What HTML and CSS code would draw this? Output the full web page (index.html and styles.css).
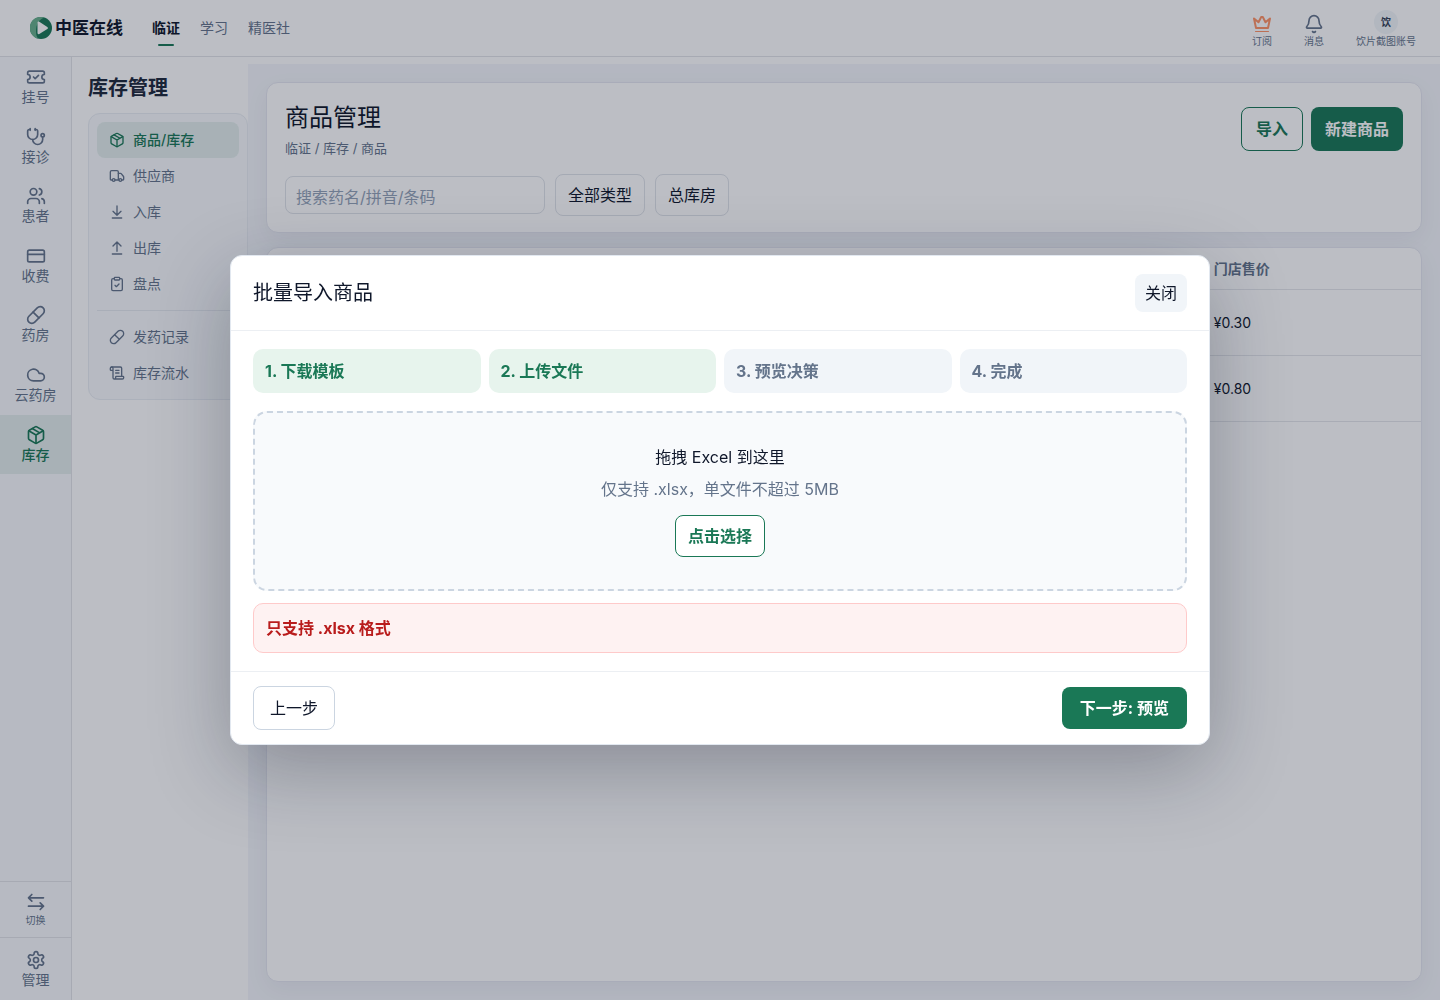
FILE: index.html
```html
<!DOCTYPE html>
<html lang="zh-CN">

<head>
    <meta charset="UTF-8" />
    <meta name="viewport" content="width=device-width, initial-scale=1.0" />
    <title>商品管理 - 中医在线</title>
    <link rel="stylesheet" href="styles.css">
</head>

<body>
    <div class="app">

        <!-- Top Bar -->
        <header class="topbar">
            <a href="#" class="brand">
                <svg class="brand-logo" viewBox="0 0 22 22">
                    <circle cx="11" cy="11" r="11" fill="#1a7856" />
                    <path d="M14.500 .6A11 11 0 1 0 8.500 21.700C6 19.500 5.500 15 6.500 9.500C7.500 5 10.500 2 14.500 .6z" fill="#68b08c" />
                    <path d="M7.500 5.800c0-1 .9-1.500 1.800-1l8 5.200c.8.500.8 1.600 0 2.100l-8 5c-.9.500-1.800 0-1.800-1z" fill="#fff" />
                </svg>
                <span>中医在线</span>
            </a>
            <nav class="tabs">
                <a href="#" class="tab active">临证</a>
                <a href="#" class="tab">学习</a>
                <a href="#" class="tab">精医社</a>
            </nav>
            <div class="top-actions">
                <a href="#" class="top-action">
                    <svg class="icon crown" viewBox="0 0 20 20">
                        <path d="M2 4.500L4 14h12l2-9.500-4.500 3.800L10.800 3h-1.600L6.500 8.300z" />
                        <path class="crown-base" d="M3.500 17.500h13" />
                    </svg>
                    <span>订阅</span>
                </a>
                <a href="#" class="top-action">
                    <svg class="icon" viewBox="0 0 24 24">
                        <path d="M10.268 21a2 2 0 0 0 3.464 0" />
                        <path d="M3.262 15.326A1 1 0 0 0 4 17h16a1 1 0 0 0 .74-1.673C19.410 13.956 18 12.499 18 8A6 6 0 0 0 6 8c0 4.499-1.411 5.956-2.738 7.326" />
                    </svg>
                    <span>消息</span>
                </a>
                <a href="#" class="top-action">
                    <span class="avatar">饮</span>
                    <span>饮片截图账号</span>
                </a>
            </div>
        </header>

        <div class="layout">

            <!-- Main Rail -->
            <nav class="rail">
                <a href="#" class="rail-item">
                    <svg class="icon" viewBox="0 0 24 24">
                        <path d="M2 9a3 3 0 0 1 0 6v2a2 2 0 0 0 2 2h16a2 2 0 0 0 2-2v-2a3 3 0 0 1 0-6V7a2 2 0 0 0-2-2H4a2 2 0 0 0-2 2Z" />
                        <path d="m9 12 2 2 4-4" />
                    </svg>
                    <span>挂号</span>
                </a>
                <a href="#" class="rail-item">
                    <svg class="icon" viewBox="0 0 24 24">
                        <path d="M11 2v2M5 2v2" />
                        <path d="M5 3H4a2 2 0 0 0-2 2v4a6 6 0 0 0 12 0V5a2 2 0 0 0-2-2h-1" />
                        <path d="M8 15a6 6 0 0 0 12 0v-3" />
                        <circle cx="20" cy="10" r="2" />
                    </svg>
                    <span>接诊</span>
                </a>
                <a href="#" class="rail-item">
                    <svg class="icon" viewBox="0 0 24 24">
                        <path d="M16 21v-2a4 4 0 0 0-4-4H6a4 4 0 0 0-4 4v2" />
                        <circle cx="9" cy="7" r="4" />
                        <path d="M22 21v-2a4 4 0 0 0-3-3.870M16 3.130a4 4 0 0 1 0 7.750" />
                    </svg>
                    <span>患者</span>
                </a>
                <a href="#" class="rail-item">
                    <svg class="icon" viewBox="0 0 24 24">
                        <rect width="20" height="14" x="2" y="5" rx="2" />
                        <path d="M2 10h20" />
                    </svg>
                    <span>收费</span>
                </a>
                <a href="#" class="rail-item">
                    <svg class="icon" viewBox="0 0 24 24">
                        <path d="m10.500 20.500 10-10a4.950 4.950 0 1 0-7-7l-10 10a4.950 4.950 0 1 0 7 7Z" />
                        <path d="m8.500 8.500 7 7" />
                    </svg>
                    <span>药房</span>
                </a>
                <a href="#" class="rail-item">
                    <svg class="icon" viewBox="0 0 24 24">
                        <path d="M17.500 19H9a7 7 0 1 1 6.710-9h1.790a4.500 4.500 0 1 1 0 9Z" />
                    </svg>
                    <span>云药房</span>
                </a>
                <a href="#" class="rail-item active">
                    <svg class="icon" viewBox="0 0 24 24">
                        <path d="M11 21.730a2 2 0 0 0 2 0l7-4A2 2 0 0 0 21 16V8a2 2 0 0 0-1-1.730l-7-4a2 2 0 0 0-2 0l-7 4A2 2 0 0 0 3 8v8a2 2 0 0 0 1 1.730z" />
                        <path d="M12 22V12M3.290 7 12 12l8.710-5M7.500 4.270l9 5.150" />
                    </svg>
                    <span>库存</span>
                </a>
                <div class="rail-bottom">
                    <a href="#" class="rail-item rail-switch">
                        <svg class="icon" viewBox="0 0 24 24">
                            <path d="M7 3 3 7l4 4M3 7h18M17 13l4 4-4 4M21 17H3" />
                        </svg>
                        <span>切换</span>
                    </a>
                    <a href="#" class="rail-item rail-admin">
                        <svg class="icon" viewBox="0 0 24 24">
                            <path d="M12.220 2h-.44a2 2 0 0 0-2 2v.18a2 2 0 0 1-1 1.730l-.43.25a2 2 0 0 1-2 0l-.15-.08a2 2 0 0 0-2.730.73l-.22.38a2 2 0 0 0 .73 2.730l.15.1a2 2 0 0 1 1 1.720v.51a2 2 0 0 1-1 1.740l-.15.09a2 2 0 0 0-.73 2.730l.22.38a2 2 0 0 0 2.730.73l.15-.08a2 2 0 0 1 2 0l.43.25a2 2 0 0 1 1 1.730V20a2 2 0 0 0 2 2h.44a2 2 0 0 0 2-2v-.18a2 2 0 0 1 1-1.730l.43-.25a2 2 0 0 1 2 0l.15.08a2 2 0 0 0 2.730-.73l.22-.39a2 2 0 0 0-.73-2.730l-.15-.08a2 2 0 0 1-1-1.740v-.5a2 2 0 0 1 1-1.740l.15-.09a2 2 0 0 0 .73-2.730l-.22-.38a2 2 0 0 0-2.730-.73l-.15.08a2 2 0 0 1-2 0l-.43-.25a2 2 0 0 1-1-1.730V4a2 2 0 0 0-2-2z" />
                            <circle cx="12" cy="12" r="3" />
                        </svg>
                        <span>管理</span>
                    </a>
                </div>
            </nav>

            <!-- Stock Menu -->
            <aside class="side">
                <h2 class="side-title">库存管理</h2>
                <nav class="side-menu">
                    <a href="#" class="side-item active">
                        <svg class="icon" viewBox="0 0 24 24">
                            <path d="M11 21.730a2 2 0 0 0 2 0l7-4A2 2 0 0 0 21 16V8a2 2 0 0 0-1-1.730l-7-4a2 2 0 0 0-2 0l-7 4A2 2 0 0 0 3 8v8a2 2 0 0 0 1 1.730z" />
                            <path d="M12 22V12M3.290 7 12 12l8.710-5M7.500 4.270l9 5.150" />
                        </svg>
                        <span>商品/库存</span>
                    </a>
                    <a href="#" class="side-item">
                        <svg class="icon" viewBox="0 0 24 24">
                            <path d="M14 18V6a2 2 0 0 0-2-2H4a2 2 0 0 0-2 2v11a1 1 0 0 0 1 1h2M15 18H9" />
                            <path d="M19 18h2a1 1 0 0 0 1-1v-3.650a1 1 0 0 0-.22-.624l-3.480-4.350A1 1 0 0 0 17.520 8H14" />
                            <circle cx="17" cy="18" r="2" />
                            <circle cx="7" cy="18" r="2" />
                        </svg>
                        <span>供应商</span>
                    </a>
                    <a href="#" class="side-item">
                        <svg class="icon" viewBox="0 0 24 24">
                            <path d="M12 17V3M6 11l6 6 6-6M19 21H5" />
                        </svg>
                        <span>入库</span>
                    </a>
                    <a href="#" class="side-item">
                        <svg class="icon" viewBox="0 0 24 24">
                            <path d="m18 9-6-6-6 6M12 3v14M5 21h14" />
                        </svg>
                        <span>出库</span>
                    </a>
                    <a href="#" class="side-item">
                        <svg class="icon" viewBox="0 0 24 24">
                            <rect width="8" height="4" x="8" y="2" rx="1" />
                            <path d="M16 4h2a2 2 0 0 1 2 2v14a2 2 0 0 1-2 2H6a2 2 0 0 1-2-2V6a2 2 0 0 1 2-2h2M9 14l2 2 4-4" />
                        </svg>
                        <span>盘点</span>
                    </a>
                    <hr class="side-divider">
                    <a href="#" class="side-item">
                        <svg class="icon" viewBox="0 0 24 24">
                            <path d="m10.500 20.500 10-10a4.950 4.950 0 1 0-7-7l-10 10a4.950 4.950 0 1 0 7 7Z" />
                            <path d="m8.500 8.500 7 7" />
                        </svg>
                        <span>发药记录</span>
                    </a>
                    <a href="#" class="side-item">
                        <svg class="icon" viewBox="0 0 24 24">
                            <path d="M15 12h-5M15 8h-5M19 17V5a2 2 0 0 0-2-2H4" />
                            <path d="M8 21h12a2 2 0 0 0 2-2v-1a1 1 0 0 0-1-1H11a1 1 0 0 0-1 1v1a2 2 0 1 1-4 0V5a2 2 0 1 0-4 0v2a1 1 0 0 0 1 1h3" />
                        </svg>
                        <span>库存流水</span>
                    </a>
                </nav>
            </aside>

            <!-- Content -->
            <main class="content">
                <section class="card page-head">
                    <div class="page-head-row">
                        <div>
                            <h1 class="page-title">商品管理</h1>
                            <p class="breadcrumb">临证 / 库存 / 商品</p>
                        </div>
                        <div class="page-actions">
                            <button type="button" class="btn btn-outline">导入</button>
                            <button type="button" class="btn btn-primary">新建商品</button>
                        </div>
                    </div>
                    <div class="filters">
                        <input type="text" class="search" placeholder="搜索药名/拼音/条码" aria-label="搜索商品" />
                        <button type="button" class="filter-btn">全部类型</button>
                        <button type="button" class="filter-btn">总库房</button>
                    </div>
                </section>

                <section class="card table-card">
                    <table class="goods-table">
                        <thead>
                            <tr>
                                <td></td>
                                <th class="col-price" scope="col">门店售价</th>
                            </tr>
                        </thead>
                        <tbody>
                            <tr>
                                <td></td>
                                <td>¥0.30</td>
                            </tr>
                            <tr>
                                <td></td>
                                <td>¥0.80</td>
                            </tr>
                        </tbody>
                    </table>
                </section>
            </main>
        </div>
    </div>

    <!-- Import Modal -->
    <div class="overlay">
        <div class="modal" role="dialog" aria-modal="true" aria-labelledby="modalTitle">
            <div class="modal-header">
                <h2 id="modalTitle">批量导入商品</h2>
                <button type="button" class="close-btn">关闭</button>
            </div>
            <div class="modal-body">
                <ol class="steps">
                    <li class="step done">1. 下载模板</li>
                    <li class="step done">2. 上传文件</li>
                    <li class="step">3. 预览决策</li>
                    <li class="step">4. 完成</li>
                </ol>
                <div class="dropzone">
                    <p>拖拽 Excel 到这里</p>
                    <p class="hint">仅支持 .xlsx，单文件不超过 5MB</p>
                    <button type="button" class="pick-btn">点击选择</button>
                </div>
                <div class="error" role="alert">只支持 .xlsx 格式</div>
            </div>
            <div class="modal-footer">
                <button type="button" class="prev-btn">上一步</button>
                <button type="button" class="next-btn">下一步: 预览</button>
            </div>
        </div>
    </div>
</body>

</html>
```

FILE: styles.css
```css
/* === Global Reset & Base Styles === */
* {
    margin: 0;
    padding: 0;
    box-sizing: border-box;
}

body {
    font-family: Inter, "Noto Sans CJK SC", sans-serif;
    font-size: 16px;
    line-height: 1.5;
    color: #0f172a;
    background-color: #ffffff;
}

a {
    color: inherit;
    text-decoration: none;
}

button,
input {
    font: inherit;
    color: inherit;
}

button {
    cursor: pointer;
}

.icon {
    display: block;
    width: 20px;
    height: 20px;
    flex: none;
    fill: none;
    stroke: currentColor;
    stroke-width: 2;
    stroke-linecap: round;
    stroke-linejoin: round;
}

.app {
    display: flex;
    flex-direction: column;
    min-height: calc(100vh - 1px);
}

/* === Top Bar === */
.topbar {
    display: flex;
    align-items: center;
    height: 57px;
    padding: 0 24px 0 30px;
    border-bottom: 1px solid #e2e4e8;
}

.brand {
    display: flex;
    align-items: center;
    gap: 3px;
    font-size: 17px;
    font-weight: 700;
    line-height: 28px;
}

.brand-logo {
    width: 22px;
    height: 22px;
}

.tabs {
    display: flex;
    gap: 20px;
    margin-left: 29px;
    font-size: 14px;
    color: #64748b;
}

.tab {
    position: relative;
    line-height: 36px;
}

.tab.active {
    font-weight: 700;
    color: #0f172a;
}

.tab.active::after {
    content: "";
    position: absolute;
    left: 50%;
    bottom: 0;
    width: 16px;
    height: 2px;
    margin-left: -8px;
    border-radius: 1px;
    background-color: #1a7856;
}

.top-actions {
    display: flex;
    align-items: flex-end;
    gap: 32px;
    margin-left: auto;
    padding-top: 2px;
    font-size: 10px;
    line-height: 14px;
    color: #64748b;
}

.top-action {
    display: flex;
    flex-direction: column;
    align-items: center;
}

.crown {
    color: #ff9466;
}

.crown-base {
    stroke-width: 1;
}

.avatar {
    width: 24px;
    height: 24px;
    border-radius: 50%;
    background-color: #f1f5f9;
    font-weight: 700;
    line-height: 24px;
    text-align: center;
    color: #334155;
}

/* === Layout === */
.layout {
    display: flex;
    flex: 1;
}

/* === Main Rail === */
.rail {
    display: flex;
    flex-direction: column;
    width: 72px;
    flex: none;
    background-color: #f8fafc;
    border-right: 1px solid #e2e4e8;
    font-size: 14px;
    line-height: 1.4;
    color: #64748b;
}

.rail-item {
    display: flex;
    flex-direction: column;
    align-items: center;
    padding: 10px 0;
}

.rail-item.active {
    background-color: #e3eeec;
    color: #1a7856;
    font-weight: 500;
}

.rail-bottom {
    margin-top: auto;
}

.rail-switch,
.rail-admin {
    border-top: 1px solid #e2e4e8;
}

.rail-switch {
    padding-bottom: 9px;
    font-size: 10px;
    line-height: 16px;
}

.rail-admin {
    padding-top: 12px;
    line-height: 20px;
}

/* === Stock Menu === */
.side {
    width: 176px;
    flex: none;
    padding: 16px 0 16px 16px;
}

.side-title {
    font-size: 20px;
    font-weight: 700;
    line-height: 30px;
    color: #1e293b;
}

.side-menu {
    margin-top: 10px;
    padding: 8px;
    border: 1px solid #e9edf3;
    border-radius: 12px;
    background-color: #f8fafc;
    font-size: 14px;
    line-height: 20px;
    color: #64748b;
}

.side-item {
    display: flex;
    align-items: center;
    gap: 8px;
    height: 36px;
    padding: 0 12px;
    border-radius: 8px;
}

.side-item .icon {
    width: 16px;
    height: 16px;
}

.side-item.active {
    background-color: #e3eeec;
    color: #1a7856;
    font-weight: 500;
}

.side-divider {
    margin: 8px 0;
    border: none;
    border-top: 1px solid #e5e9ef;
}

/* === Content === */
.content {
    display: flex;
    flex-direction: column;
    flex: 1;
    gap: 14px;
    min-width: 0;
    margin-top: 7px;
    padding: 18px;
    background-color: #f4f6fb;
}

.card {
    border: 1px solid #e5e7f0;
    border-radius: 12px;
    background-color: #ffffff;
    box-shadow: 0 8px 24px rgba(15, 23, 42, 0.05);
}

.page-head {
    padding: 18px 18px 16px;
}

.page-head-row {
    display: flex;
    align-items: center;
    justify-content: space-between;
}

.page-title {
    font-size: 24px;
    font-weight: 400;
    line-height: 34px;
}

.breadcrumb {
    margin-top: 4px;
    font-size: 13px;
    line-height: 18px;
    color: #64748b;
}

.page-actions {
    display: flex;
    gap: 8px;
}

.btn {
    height: 44px;
    padding: 0 14px;
    border: none;
    border-radius: 8px;
    font-weight: 700;
}

.btn-outline {
    border: 1px solid #1a7856;
    background-color: #ffffff;
    color: #1a7856;
}

.btn-primary {
    background-color: #1a7856;
    color: #ffffff;
}

.filters {
    display: flex;
    align-items: center;
    gap: 10px;
    margin-top: 17px;
}

.search {
    width: 260px;
    height: 38px;
    padding: 4px 10px 0;
    border: 1px solid #dfe3e9;
    border-radius: 8px;
    background-color: transparent;
}

.search::placeholder {
    color: #94a3b8;
}

.filter-btn {
    height: 42px;
    padding: 0 12px;
    border: 1px solid #dfe3e9;
    border-radius: 8px;
    background-color: transparent;
}

/* === Goods Table === */
.table-card {
    flex: 1;
    overflow: hidden;
}

.goods-table {
    width: 100%;
    table-layout: fixed;
    border-collapse: separate;
    border-spacing: 0;
    font-size: 14px;
    text-align: left;
}

.goods-table th,
.goods-table td {
    height: 66px;
    padding: 0 12px;
    border-bottom: 1px solid #e5e7eb;
}

.goods-table thead th,
.goods-table thead td {
    height: 42px;
}

.goods-table th {
    font-weight: 600;
    color: #64748b;
}

.col-price {
    width: 19%;
}

/* === Import Modal === */
.overlay {
    position: fixed;
    inset: 0 0 1px;
    display: flex;
    align-items: center;
    justify-content: center;
    padding: 24px;
    background-color: rgba(15, 23, 42, 0.28);
}

.modal {
    width: 100%;
    max-width: 980px;
    border: 1px solid #e2e8f0;
    border-radius: 12px;
    background-color: #ffffff;
    box-shadow: 0 24px 80px rgba(15, 23, 42, 0.3);
}

.modal-header,
.modal-footer {
    display: flex;
    align-items: center;
    justify-content: space-between;
}

.modal-header {
    padding: 18px 22px;
    border-bottom: 1px solid #eceff3;
}

.modal-header h2 {
    font-size: 20px;
    font-weight: 400;
    line-height: 30px;
}

.close-btn {
    height: 38px;
    padding: 0 10px;
    border: none;
    border-radius: 8px;
    background-color: #f1f5f9;
}

.modal-body {
    padding: 18px 22px;
}

.steps {
    display: grid;
    grid-template-columns: repeat(4, 1fr);
    gap: 8px;
    list-style: none;
}

.step {
    padding: 10px 12px;
    border-radius: 10px;
    background-color: #f1f5f9;
    font-weight: 700;
    color: #64748b;
}

.step.done {
    background-color: #e7f4ed;
    color: #1a7856;
}

.dropzone {
    display: flex;
    flex-direction: column;
    align-items: center;
    justify-content: center;
    height: 180px;
    margin-top: 18px;
    border: 2px dashed #cbd5e1;
    border-radius: 14px;
    background-color: #f8fafc;
}

.dropzone .hint {
    margin-top: 8px;
    color: #64748b;
}

.pick-btn {
    height: 42px;
    margin-top: 14px;
    padding: 0 12px;
    border: 1px solid #1a7856;
    border-radius: 8px;
    background-color: #ffffff;
    font-weight: 700;
    color: #1a7856;
}

.error {
    margin-top: 12px;
    padding: 12px;
    border: 1px solid #fecaca;
    border-radius: 10px;
    background-color: #fef2f2;
    font-weight: 700;
    color: #b91c1c;
}

.modal-footer {
    padding: 14px 22px;
    border-top: 1px solid #eceff3;
}

.prev-btn {
    height: 44px;
    padding: 0 16px;
    border: 1px solid #cbd5e1;
    border-radius: 8px;
    background-color: #ffffff;
}

.next-btn {
    height: 42px;
    padding: 0 18px;
    border: none;
    border-radius: 8px;
    background-color: #1a7856;
    font-weight: 700;
    color: #ffffff;
}
```
